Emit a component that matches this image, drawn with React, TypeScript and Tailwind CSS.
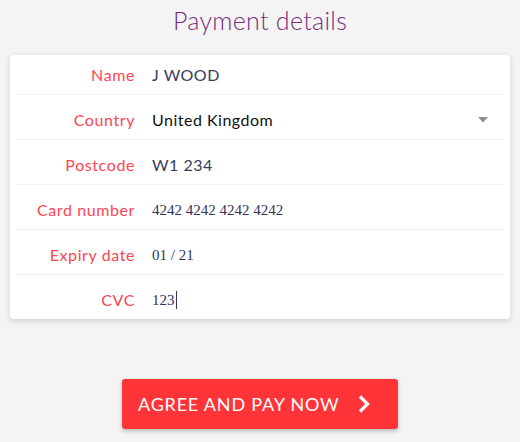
import React from 'react';

const rows = [
  { label: 'Name', value: 'J WOOD', kind: 'text' },
  { label: 'Country', value: 'United Kingdom', kind: 'select' },
  { label: 'Postcode', value: 'W1 234', kind: 'text' },
  { label: 'Card number', value: '4242 4242 4242 4242', kind: 'card' },
  { label: 'Expiry date', value: '01 / 21', kind: 'card' },
  { label: 'CVC', value: '123', kind: 'cvc' },
];

const sans = "font-['Lato','Open_Sans',sans-serif]";

export default function App() {
  return (
    <div className={`min-h-[442px] w-[520px] bg-[#f4f4f4] ${sans}`}>
      <h1 className="pt-[4px] text-center text-[25px] font-light leading-[32px] tracking-[0.3px] text-[#7a2c7f]">Payment details</h1>

      <div className="mx-[10px] mt-[19px] rounded-[4px] bg-white px-[5px] shadow-[0_2px_6px_rgba(0,0,0,0.15)]">
        {rows.map((row, i) => (
          <div
            key={row.label}
            className={`flex items-center ${i === 0 ? 'h-[40px]' : i < rows.length - 1 ? 'h-[45px] pt-[6px]' : 'h-[44px] pt-[6px]'} ${
              i < rows.length - 1 ? 'border-b border-[#eef3f8]' : ''
            }`}
          >
            <label className="w-[120px] shrink-0 text-right text-[16px] tracking-[0.6px] text-[#ff4452]">{row.label}</label>
            <div className="ml-[17px] flex flex-1 items-center pr-[17px]">
              {row.kind === 'card' || row.kind === 'cvc' ? (
                <span className="font-['Liberation_Serif',serif] text-[15px] text-[#32325d]">
                  {row.value}
                  {row.kind === 'cvc' && <span className="ml-px inline-block h-[18px] w-px bg-[#32325d] align-[-4px]" />}
                </span>
              ) : (
                <span
                  className={`text-[16px] tracking-[0.5px] ${row.kind === 'select' ? 'text-[#111111]' : 'text-[#3a3a5e]'}`}
                >
                  {row.value}
                </span>
              )}
              {row.kind === 'select' && (
                <svg className="ml-auto" width="10" height="6" viewBox="0 0 10 6">
                  <path d="M0 0h10L5 5.5z" fill="#8e8e8e" />
                </svg>
              )}
            </div>
          </div>
        ))}
      </div>

      <div className="mt-[60px] flex justify-center">
        <button className="flex h-[50px] w-[276px] items-center rounded-[3px] bg-[#fe3438] pl-[16px] text-[18px] tracking-[0.8px] text-white shadow-[0_2px_4px_rgba(0,0,0,0.25)]">
          AGREE AND PAY NOW
          <svg className="ml-[18px]" width="14" height="20" viewBox="0 0 14 20">
            <path d="M3 2.5l7.5 7.5L3 17.5" fill="none" stroke="#fff" strokeWidth="3.2" />
          </svg>
        </button>
      </div>
    </div>
  );
}
